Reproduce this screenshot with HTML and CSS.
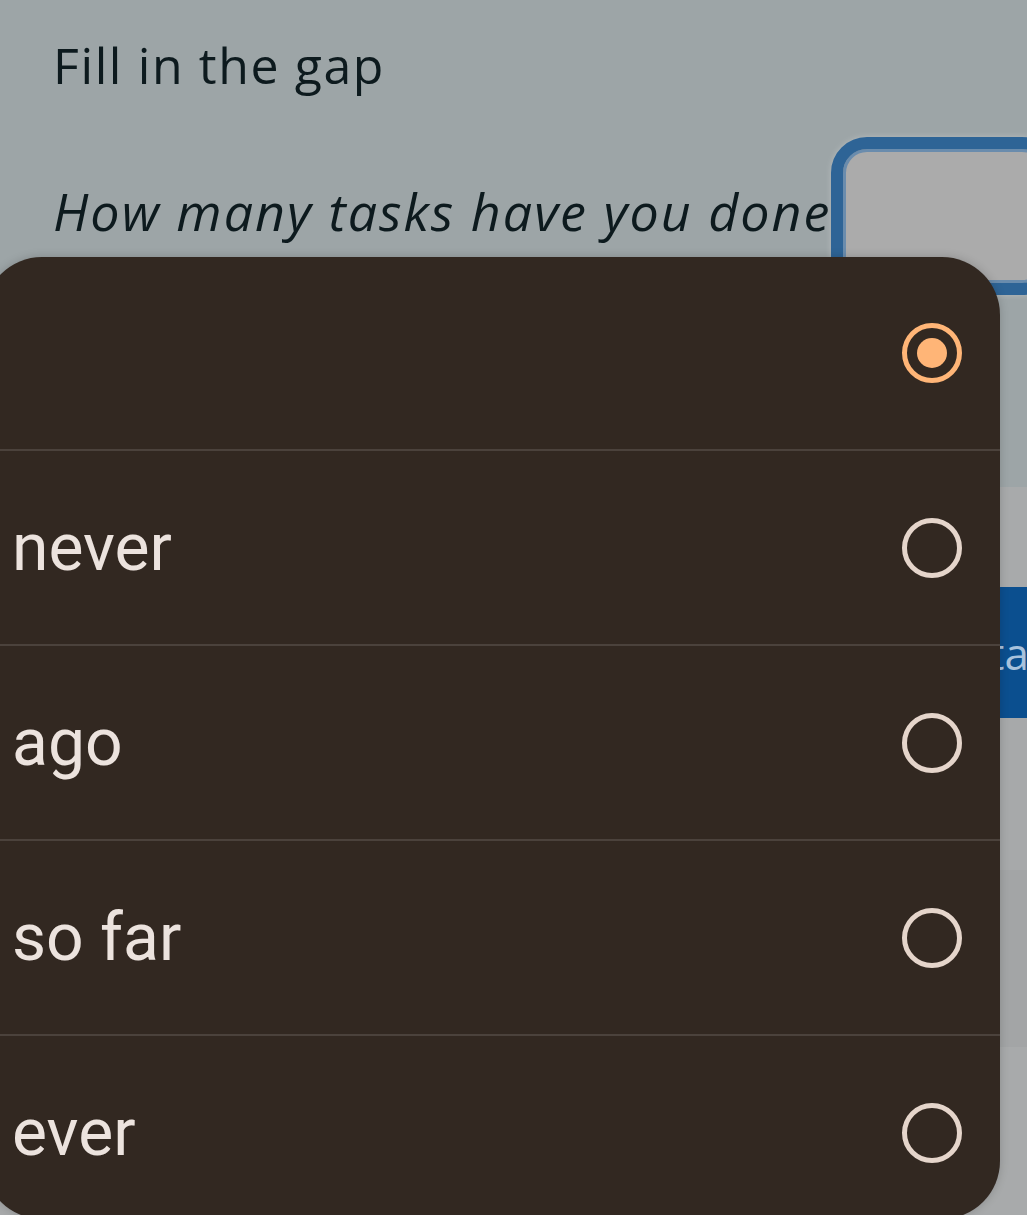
FILE: index.html
```html
<!DOCTYPE html>
<html lang="en">
<head>
<meta charset="utf-8">
<title>Fill in the gap</title>
<link rel="stylesheet" href="styles.css">
</head>
<body>
<main class="page">
  <h1 class="title">Fill in the gap</h1>
  <div class="question">
    <span class="prompt">How many tasks have you done</span>
    <div class="select-box"></div>
  </div>
  <div class="band band-gap"></div>
  <div class="band band-a"></div>
  <div class="btn-row"><span class="btn-label">Save data</span></div>
  <div class="band band-b"></div>
  <div class="band band-c"></div>
  <div class="band band-d"></div>
</main>

<div class="sheet" role="listbox">
  <div class="option">
    <span class="label"></span>
    <span class="radio checked"></span>
  </div>
  <div class="option">
    <span class="label">never</span>
    <span class="radio"></span>
  </div>
  <div class="option">
    <span class="label">ago</span>
    <span class="radio"></span>
  </div>
  <div class="option">
    <span class="label">so far</span>
    <span class="radio"></span>
  </div>
  <div class="option">
    <span class="label">ever</span>
    <span class="radio"></span>
  </div>
</div>
</body>
</html>
```

FILE: styles.css
```css
html, body {
  margin: 0;
  padding: 0;
}
body {
  background: #9da5a7;
  height: 1215px;
  overflow: hidden;
  font-family: "Open Sans", "Lato", sans-serif;
  color: #0d1a1e;
}
.page {
  display: flex;
  flex-direction: column;
}
.title {
  margin: 0;
  padding: 34px 0 0 53px;
  font-size: 50px;
  line-height: 63px;
  font-weight: 400;
  letter-spacing: 1.6px;
}
.question {
  margin-top: 40px;
  display: flex;
  align-items: flex-start;
  padding-left: 53px;
  height: 158px;
}
.prompt {
  padding-top: 42px;
  font-size: 52px;
  line-height: 63px;
  font-style: italic;
  letter-spacing: 2px;
  white-space: nowrap;
}
.select-box {
  margin-left: auto;
  margin-right: -30px;
  width: 227px;
  height: 158px;
  box-sizing: border-box;
  border: 12px solid #2e6496;
  border-radius: 36px;
  background: #ababab;
  box-shadow: inset 0 0 0 3px #6a8cad, 0 0 6px rgba(255,255,255,0.25);
  flex-shrink: 0;
}
.band-gap { height: 192px; }
.band-a { height: 100px; background: #a8aaab; }
.btn-row {
  height: 131px;
  background: #0b4f8f;
  display: flex;
  align-items: center;
  justify-content: flex-end;
  margin-right: -2px;
}
.btn-label {
  font-family: "Open Sans", sans-serif;
  font-size: 44px;
  color: #a9c2dc;
}
.band-b { height: 152px; background: #a7a9aa; }
.band-c { height: 177px; background: #a3a5a6; }
.band-d { height: 170px; background: #a8aaab; }

.sheet {
  position: fixed;
  left: -16px;
  top: 257px;
  width: 1016px;
  height: 962px;
  background: #322821;
  border-radius: 58px;
  box-shadow: 0 0 10px rgba(0,0,0,0.18);
  display: flex;
  flex-direction: column;
  overflow: hidden;
  font-family: "Roboto", sans-serif;
}
.option {
  height: 193px;
  flex-shrink: 0;
  display: flex;
  align-items: center;
  justify-content: space-between;
  padding: 0 38px 0 28px;
  border-top: 2px solid #4b423c;
}
.option:first-child {
  height: 192px;
  border-top: none;
}
.label {
  font-size: 66px;
  color: #ece3de;
}
.radio {
  width: 60px;
  height: 60px;
  box-sizing: border-box;
  border: 5px solid #e5d5cb;
  border-radius: 50%;
  display: flex;
  align-items: center;
  justify-content: center;
}
.radio.checked {
  border-color: #ffb577;
}
.radio.checked::after {
  content: "";
  width: 30px;
  height: 30px;
  border-radius: 50%;
  background: #ffb577;
}
```
